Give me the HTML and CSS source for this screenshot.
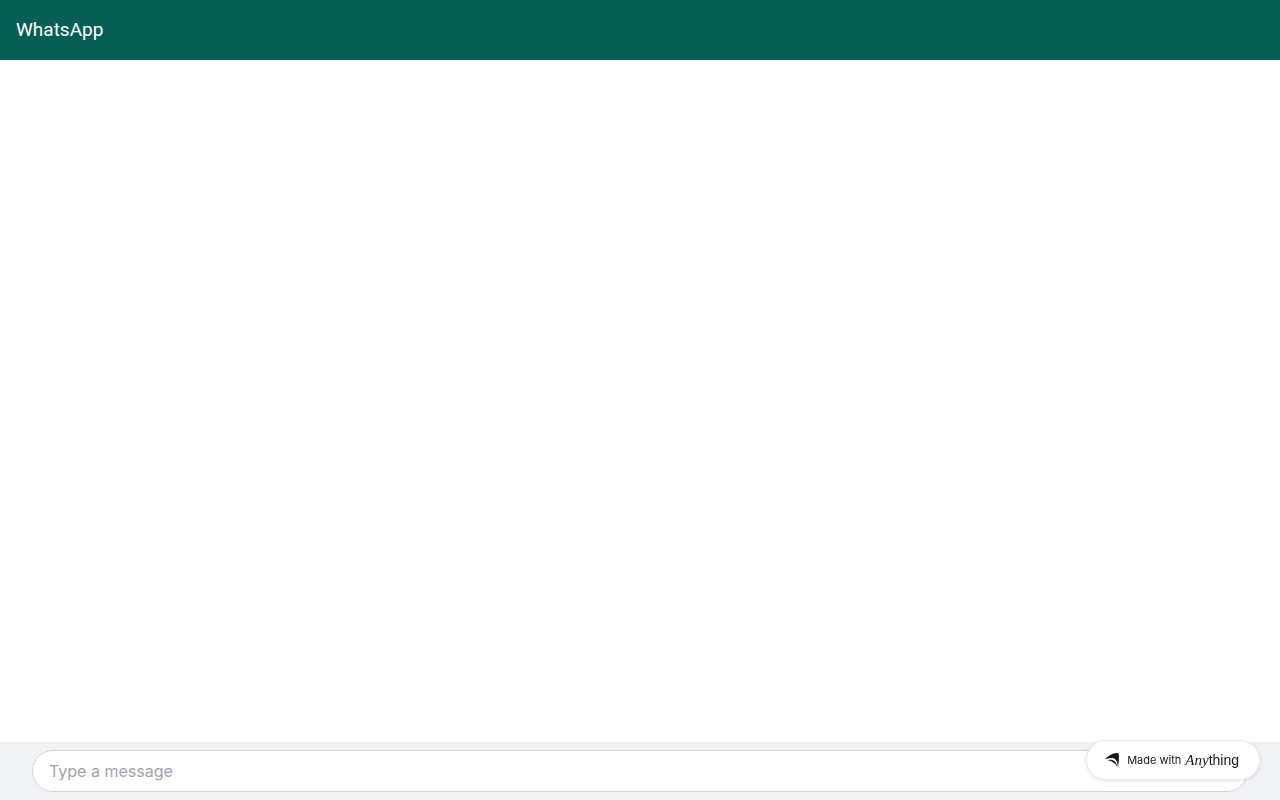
FILE: index.html
```html
<!DOCTYPE html>
<html lang="en">
<head>
<meta charset="utf-8">
<meta name="viewport" content="width=device-width, initial-scale=1">
<title>WhatsApp</title>
<link rel="stylesheet" href="styles.css">
</head>
<body>
<div class="app">
  <header class="header">
    <h1 class="title">WhatsApp</h1>
  </header>
  <main class="messages"></main>
  <form class="composer">
    <input class="message-input" type="text" placeholder="Type a message" aria-label="Type a message">
  </form>
</div>
<a class="badge" href="#">
  <svg class="badge-icon" viewBox="0 0 14 16" aria-hidden="true">
    <path d="M0 7.4C3 3.8 7.5 1.2 12 1C13.2 1 13.7 1.6 13.8 2.8C14.1 7 13.8 11.5 12.8 15.2C12.7 10 11.2 6.8 8 6.2C5.2 5.8 2.5 6.5 0 7.4Z"/>
    <path d="M2.8 8.3C7.6 6.8 11.4 9.2 12.2 14.8C10 11.2 7 8.9 2.8 8.3Z"/>
  </svg>
  <span class="badge-text">Made with</span>
  <span class="wordmark"><span class="wordmark-serif">Any</span><span class="wordmark-sans">thing</span></span>
</a>
</body>
</html>
```
FILE: styles.css
```css
* {
  box-sizing: border-box;
}

body {
  margin: 0;
  background: #fff;
  font-family: Inter, "Liberation Sans", sans-serif;
}

.app {
  display: flex;
  flex-direction: column;
  min-height: 100vh;
}

.header {
  padding: 16px;
  background: #075e54;
  color: #fff;
}

.title {
  margin: 0;
  font-family: Roboto, sans-serif;
  font-size: 19px;
  font-weight: 400;
  line-height: 28px;
}

.messages {
  flex: 1;
}

.composer {
  display: flex;
  padding: 8px 32px;
  background: #f0f2f5;
}

.message-input {
  flex: 1;
  min-width: 0;
  padding: 8px 16px;
  border: 1px solid #d1d5db;
  border-radius: 24px;
  background: #fff;
  color: #111827;
  font-family: inherit;
  font-size: 16px;
  line-height: 24px;
}

.message-input::placeholder {
  color: #9ca3af;
  opacity: 1;
}

.badge {
  position: fixed;
  right: 20px;
  bottom: 20px;
  display: flex;
  align-items: center;
  height: 40px;
  padding: 0 20px 0 18px;
  border: 1px solid #ebebed;
  border-radius: 20px;
  background: #fff;
  box-shadow: 0 1px 4px rgba(0, 0, 0, 0.1);
  color: #18191b;
  text-decoration: none;
}

.badge-icon {
  width: 14px;
  height: 16px;
  margin-right: 8px;
  fill: currentColor;
}

.badge-text {
  margin-right: 4px;
  font-size: 11px;
  line-height: 16px;
}

.wordmark {
  display: flex;
  align-items: baseline;
  line-height: 20px;
}

.wordmark-serif {
  font-family: "Liberation Serif", serif;
  font-size: 15px;
  font-style: italic;
}

.wordmark-sans {
  font-family: "Liberation Sans", sans-serif;
  font-size: 14px;
}
```
